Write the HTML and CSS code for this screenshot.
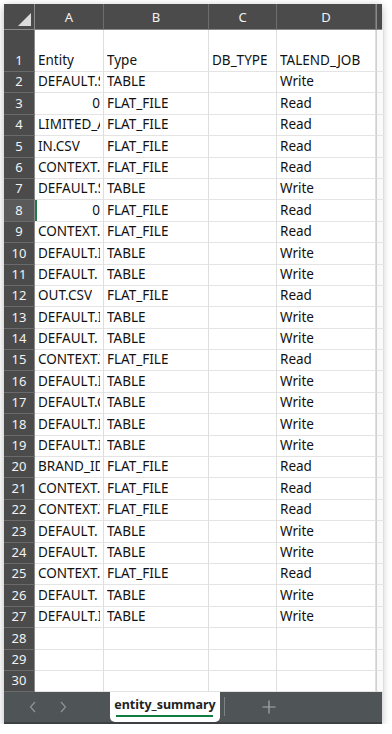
FILE: index.html
```html
<!DOCTYPE html>
<html lang="en">
<head>
  <meta charset="UTF-8" />
  <meta name="viewport" content="width=device-width, initial-scale=1.0" />
  <title>entity_summary</title>
  <link rel="stylesheet" href="styles.css">
</head>
<body>
  <div class="window">
    <div class="sheet" id="sheet">
      <div class="corner"><span class="corner-tri"></span></div>
      <div class="col-head">A</div>
      <div class="col-head">B</div>
      <div class="col-head">C</div>
      <div class="col-head">D</div>
      <div class="col-head edge"></div>
    </div>

    <div class="tab-bar">
      <div class="tab-nav">
        <span class="nav-arrow">
          <svg width="10" height="14" viewBox="0 0 10 14"><path d="M7 2 L2.5 7 L7 12" fill="none" stroke="#8d9294" stroke-width="1.3"/></svg>
        </span>
        <span class="nav-arrow">
          <svg width="10" height="14" viewBox="0 0 10 14"><path d="M3 2 L7.5 7 L3 12" fill="none" stroke="#8d9294" stroke-width="1.3"/></svg>
        </span>
      </div>
      <div class="tab active">entity_summary</div>
      <div class="tab-sep"></div>
      <div class="tab-add">
        <svg width="14" height="14" viewBox="0 0 14 14"><path d="M7 0.5 V13.5 M0.5 7 H13.5" stroke="#a7abad" stroke-width="1.2"/></svg>
      </div>
    </div>
  </div>

  <script>
    const rows = [
      ["Entity", "Type", "DB_TYPE", "TALEND_JOB"],
      ["DEFAULT.STG_SALES", "TABLE", "", "Write"],
      ["0", "FLAT_FILE", "", "Read"],
      ["LIMITED_ACCESS.CSV", "FLAT_FILE", "", "Read"],
      ["IN.CSV", "FLAT_FILE", "", "Read"],
      ["CONTEXT.SRC_DIR", "FLAT_FILE", "", "Read"],
      ["DEFAULT.STG_ORDERS", "TABLE", "", "Write"],
      ["0", "FLAT_FILE", "", "Read"],
      ["CONTEXT.SRC_DIR", "FLAT_FILE", "", "Read"],
      ["DEFAULT.INVENTORY", "TABLE", "", "Write"],
      ["DEFAULT. ITEMS", "TABLE", "", "Write"],
      ["OUT.CSV", "FLAT_FILE", "", "Read"],
      ["DEFAULT.ITEM_LOG", "TABLE", "", "Write"],
      ["DEFAULT. ORDERS", "TABLE", "", "Write"],
      ["CONTEXT.TGT_DIR", "FLAT_FILE", "", "Read"],
      ["DEFAULT.INV_HIST", "TABLE", "", "Write"],
      ["DEFAULT.CUSTOMER", "TABLE", "", "Write"],
      ["DEFAULT.IDX_MAP", "TABLE", "", "Write"],
      ["DEFAULT.IMPORT", "TABLE", "", "Write"],
      ["BRAND_ID.CSV", "FLAT_FILE", "", "Read"],
      ["CONTEXT.SRC_DIR", "FLAT_FILE", "", "Read"],
      ["CONTEXT.TGT_DIR", "FLAT_FILE", "", "Read"],
      ["DEFAULT. BRANDS", "TABLE", "", "Write"],
      ["DEFAULT. STORES", "TABLE", "", "Write"],
      ["CONTEXT.OUT_DIR", "FLAT_FILE", "", "Read"],
      ["DEFAULT. PRICES", "TABLE", "", "Write"],
      ["DEFAULT.ITEMS_V2", "TABLE", "", "Write"]
    ];

    const sheet = document.getElementById("sheet");

    function cell(cls, text) {
      const div = document.createElement("div");
      div.className = cls;
      if (text) {
        const span = document.createElement("span");
        span.textContent = text;
        div.appendChild(span);
      }
      sheet.appendChild(div);
      return div;
    }

    for (let r = 1; r <= 30; r++) {
      const data = rows[r - 1] || ["", "", "", ""];
      const head = cell("row-head", String(r));
      if (r === 8) head.classList.add("selected");

      data.forEach((value, c) => {
        // numbers sit on the right like in a real sheet
        const isNum = value !== "" && !isNaN(value);
        const el = cell("cell" + (isNum ? " num" : ""), value);
        if (r === 8 && c === 0) el.classList.add("active-row");
      });
      cell("cell edge", "");
    }
  </script>
</body>
</html>
```

FILE: styles.css
```css
html {
  font-size: 16px;
}

body {
  margin: 0;
  background: #fff;
  font-family: "Noto Sans", "Open Sans", sans-serif;
  color: #111;
}

.window {
  width: 378px;
  margin: 4px 0 0 4px;
  box-shadow: 0 2px 8px rgba(0, 0, 0, 0.28);
  background: #fff;
}

.sheet {
  display: grid;
  grid-template-columns: 31px 69px 105px 68px 99px 6px;
  grid-template-rows: 26px 42px repeat(29, 21.4px);
}

.corner,
.col-head,
.row-head {
  background: #4b4b4b;
  color: #f2f2f2;
  box-sizing: border-box;
  font-size: 13px;
}

.corner {
  position: relative;
  border-right: 1px solid #8a8a8a;
  border-bottom: 1px solid #8a8a8a;
}

.corner-tri {
  position: absolute;
  right: 3px;
  bottom: 3px;
  width: 0;
  height: 0;
  border-left: 13px solid transparent;
  border-bottom: 13px solid #dcdcdc;
}

.col-head {
  display: flex;
  align-items: center;
  justify-content: center;
  border-right: 1px solid #6e6e6e;
  border-bottom: 1px solid #8a8a8a;
}

.col-head.edge {
  border-right: none;
  border-left: 1px solid #8a8a8a;
}

.row-head {
  display: flex;
  align-items: flex-end;
  justify-content: center;
  padding-bottom: 2px;
  line-height: 18px;
  border-right: 1px solid #8a8a8a;
  border-bottom: 1px solid #6a6a6a;
}

.row-head.selected {
  background: #5a5a5a;
}

.cell {
  display: flex;
  align-items: flex-end;
  box-sizing: border-box;
  padding: 0 3px 2px;
  overflow: hidden;
  white-space: nowrap;
  font-size: 13.5px;
  line-height: 18px;
  border-right: 1px solid #dedede;
  border-bottom: 1px solid #e4e4e4;
}

.cell span {
  min-width: 0;
  overflow: hidden;
}

.cell.num {
  justify-content: flex-end;
}

.cell.edge {
  border-right: 1px solid #dedede;
  border-left: 1px solid #d0d0d0;
  background: #fafafa;
}

.cell.active-row {
  box-shadow: inset 2px 0 0 #1e7b45;
}

.tab-bar {
  display: flex;
  align-items: stretch;
  height: 30px;
  background: #4f5457;
  border-bottom: 2px solid #3d4143;
}

.tab-nav {
  display: flex;
  align-items: center;
  gap: 20px;
  width: 106px;
  padding-left: 24px;
  box-sizing: border-box;
}

.nav-arrow {
  display: flex;
}

.tab {
  width: 110px;
  background: #fff;
  border-radius: 0 0 5px 5px;
  font-size: 12.5px;
  font-weight: bold;
  color: #222;
  text-align: center;
  line-height: 26px;
  position: relative;
}

.tab.active::after {
  content: "";
  position: absolute;
  left: 6px;
  right: 7px;
  bottom: 5px;
  height: 2px;
  background: #107c41;
}

.tab-sep {
  width: 1px;
  margin: 5px 0 6px 4px;
  background: #7d8284;
}

.tab-add {
  display: flex;
  align-items: center;
  margin-left: 37px;
}
```
